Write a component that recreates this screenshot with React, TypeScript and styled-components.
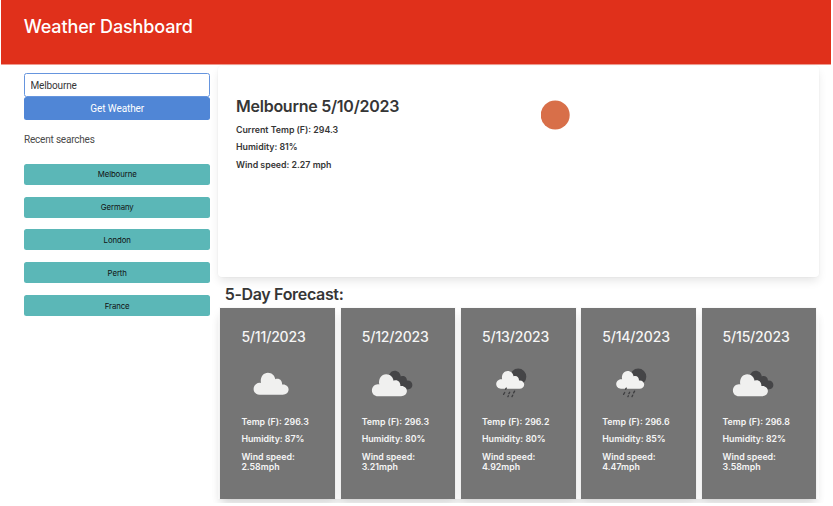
import React from 'react';
import styled, { createGlobalStyle } from 'styled-components';

const GlobalStyle = createGlobalStyle`
  *, *::before, *::after { box-sizing: border-box; }
  body { margin: 0; background: #fff; font-family: Inter, 'Liberation Sans', sans-serif; color: #363636; }
  h1, h2, h3, p { margin: 0; }
`;

const Page = styled.div`
  width: 833px;
  height: 506px;
  padding: 0 2px 3px 1px;
  overflow: hidden;
`;

const Screen = styled.div`
  height: 503px;
  overflow: hidden;
`;

const Header = styled.header`
  height: 65px;
  padding: 14px 22.7px;
  background: #e0301b;
  border-bottom: 1px solid #ef9a8f;
`;

const PageTitle = styled.h1`
  color: #fff;
  font-size: 18px;
  line-height: 26px;
  font-weight: 550;
  letter-spacing: -0.13px;
  white-space: nowrap;
`;

const Columns = styled.main`
  display: grid;
  grid-template-columns: 186.4px 601px;
  column-gap: 7.6px;
  padding-left: 23px;
`;

const Sidebar = styled.aside`
  display: flex;
  flex-direction: column;
  padding-top: 8px;
`;

const CityInput = styled.input`
  width: 100%;
  height: 24px;
  padding: 0 5.5px;
  border: 1px solid #6695de;
  border-radius: 2.5px;
  outline: none;
  color: #363636;
  background: #fff;
  font: 400 10px Roboto, sans-serif;
  letter-spacing: -0.15px;
`;

const SearchButton = styled.button`
  height: 23.4px;
  padding: 0;
  border: 0;
  border-radius: 2.5px;
  background: #5086d6;
  color: #fff;
  font: 400 10px Roboto, sans-serif;
  letter-spacing: -0.1px;
`;

const RecentLabel = styled.p`
  margin-top: 11.6px;
  color: #4a4a4a;
  font: 400 10px/16px Roboto, sans-serif;
  letter-spacing: -0.2px;
`;

const RecentList = styled.div`
  display: grid;
  gap: 11.9px;
  margin-top: 15.7px;
`;

const RecentButton = styled.button`
  height: 21px;
  padding: 0;
  border: 0;
  border-radius: 2.5px;
  background: #5bb7b7;
  color: #111;
  font: 400 7.8px Inter, sans-serif;
  letter-spacing: -0.1px;
`;

const CurrentCard = styled.section`
  display: grid;
  grid-template-columns: 305px auto;
  align-items: start;
  height: 211px;
  margin-top: 1px;
  padding: 30px 18px 0;
  border-radius: 4px;
  background: #fff;
  box-shadow: 0 5px 10px -1px rgba(10, 10, 10, 0.1), 0 0 0 1px rgba(10, 10, 10, 0.015);
`;

const CityHeading = styled.h2`
  font-size: 16px;
  line-height: 20px;
  font-weight: 600;
  letter-spacing: -0.25px;
  white-space: nowrap;
`;

const Reading = styled.p`
  margin-top: 7.4px;
  font-size: 8.8px;
  line-height: 10px;
  font-weight: 600;
`;

const CurrentReadings = styled.div`
  padding-top: 1.7px;
`;

const SunIcon = styled.svg`
  display: block;
  width: 30px;
  height: 30px;
  margin-top: 3.5px;
`;

const ForecastHeading = styled.h2`
  margin: 7px 0 4px 6.7px;
  font-size: 16px;
  line-height: 20px;
  font-weight: 600;
  letter-spacing: -0.33px;
`;

const ForecastRow = styled.section`
  display: grid;
  grid-template-columns: repeat(5, 114.6px);
  column-gap: 5.7px;
  padding-left: 2.5px;
  box-shadow: 0 7px 10px -3px rgba(10, 10, 10, 0.09);
`;

const DayCard = styled.article`
  height: 191px;
  padding: 19px 20.9px 0;
  background: #757575;
  color: #f5f5f5;
  box-shadow: 0 5px 10px -1px rgba(10, 10, 10, 0.1), 0 0 0 1px rgba(10, 10, 10, 0.015);
`;

const DayHeading = styled.h3`
  font-size: 14px;
  line-height: 20px;
  font-weight: 550;
  letter-spacing: -0.17px;
  white-space: nowrap;
`;

const WeatherIcon = styled.svg`
  display: block;
  width: 60px;
  height: 60px;
`;

const DayReadings = styled.div`
  padding-top: 2.7px;
`;

type Condition = 'cloud' | 'broken' | 'rain';

const cloudPath =
  'M6 22C2.7 22 0 19.5 0 16.2C0 13 2.7 10.1 6 10.1C6.4 10.1 6.9 10.1 7.4 10.3C6.2 4.8 9.5 0 14.3 0C18.3 0 21.2 2.8 21.7 6.6C25.4 5 28.7 7.7 28.5 11.8C32.2 11.2 35 13.7 35 16.8C35 19.8 32.5 22 29.2 22Z';

function ConditionIcon({ kind }: { kind: Condition }) {
  return (
    <WeatherIcon viewBox="0 0 60 60" aria-hidden="true">
      {kind === 'cloud' && <path d={cloudPath} transform="translate(12.6 25.7)" fill="#f0f0ef" />}
      {kind === 'broken' && (
        <>
          <path
            d="M23 31C24 26.5 26.5 23.7 29.5 23.7C33 23.7 35.4 26 35.8 29.4C39 28.1 42.2 30.4 41.9 33.6C45 33.2 47.4 35.1 47.4 38C47.4 40.7 45.4 42.4 42.5 42.4H36Z"
            transform="translate(3 0)"
            fill="#454547"
          />
          <path d={cloudPath} transform="translate(9.9 27.2)" fill="#f0f0ef" />
        </>
      )}
      {kind === 'rain' && (
        <>
          <circle cx="36.2" cy="29.7" r="8.1" fill="#454547" />
          <path d={cloudPath} transform="translate(14.2 24) scale(.8 .81)" fill="#f2f2f1" />
          <g stroke="#3e3e40" strokeWidth="1.3" strokeLinecap="round">
            <path d="M24.3 41.1l-.7 1.1M22.7 45.5l-1.1 1.9M27.7 45.2l-.8 1.4M32.6 44.1l-1 1.8M26.4 48.7l-.5.9M30.7 48.2l-.7 1.4" />
          </g>
        </>
      )}
    </WeatherIcon>
  );
}

const cities = ['Melbourne', 'Germany', 'London', 'Perth', 'France'];

const forecast: { date: string; kind: Condition; temp: string; humidity: number; wind: string }[] = [
  { date: '5/11/2023', kind: 'cloud', temp: '296.3', humidity: 87, wind: '2.58' },
  { date: '5/12/2023', kind: 'broken', temp: '296.3', humidity: 80, wind: '3.21' },
  { date: '5/13/2023', kind: 'rain', temp: '296.2', humidity: 80, wind: '4.92' },
  { date: '5/14/2023', kind: 'rain', temp: '296.6', humidity: 85, wind: '4.47' },
  { date: '5/15/2023', kind: 'broken', temp: '296.8', humidity: 82, wind: '3.58' },
];

export default function App() {
  return (
    <Page>
      <GlobalStyle />
      <Screen>
        <Header>
          <PageTitle>Weather Dashboard</PageTitle>
        </Header>
        <Columns>
          <Sidebar>
            <CityInput defaultValue="Melbourne" aria-label="City" />
            <SearchButton>Get Weather</SearchButton>
            <RecentLabel>Recent searches</RecentLabel>
            <RecentList>
              {cities.map((city) => (
                <RecentButton key={city}>{city}</RecentButton>
              ))}
            </RecentList>
          </Sidebar>
          <div>
            <CurrentCard>
              <div>
                <CityHeading>Melbourne 5/10/2023</CityHeading>
                <CurrentReadings>
                  <Reading>Current Temp (F): 294.3</Reading>
                  <Reading>Humidity: 81%</Reading>
                  <Reading>Wind speed: 2.27 mph</Reading>
                </CurrentReadings>
              </div>
              <SunIcon viewBox="0 0 30 30" aria-hidden="true">
                <circle cx="14.2" cy="15" r="14.5" fill="#d86f49" />
              </SunIcon>
            </CurrentCard>
            <ForecastHeading>5-Day Forecast:</ForecastHeading>
            <ForecastRow>
              {forecast.map((day) => (
                <DayCard key={day.date}>
                  <DayHeading>{day.date}</DayHeading>
                  <ConditionIcon kind={day.kind} />
                  <DayReadings>
                    <Reading>Temp (F): {day.temp}</Reading>
                    <Reading>Humidity: {day.humidity}%</Reading>
                    <Reading>
                      Wind speed:
                      <br />
                      {day.wind}mph
                    </Reading>
                  </DayReadings>
                </DayCard>
              ))}
            </ForecastRow>
          </div>
        </Columns>
      </Screen>
    </Page>
  );
}
